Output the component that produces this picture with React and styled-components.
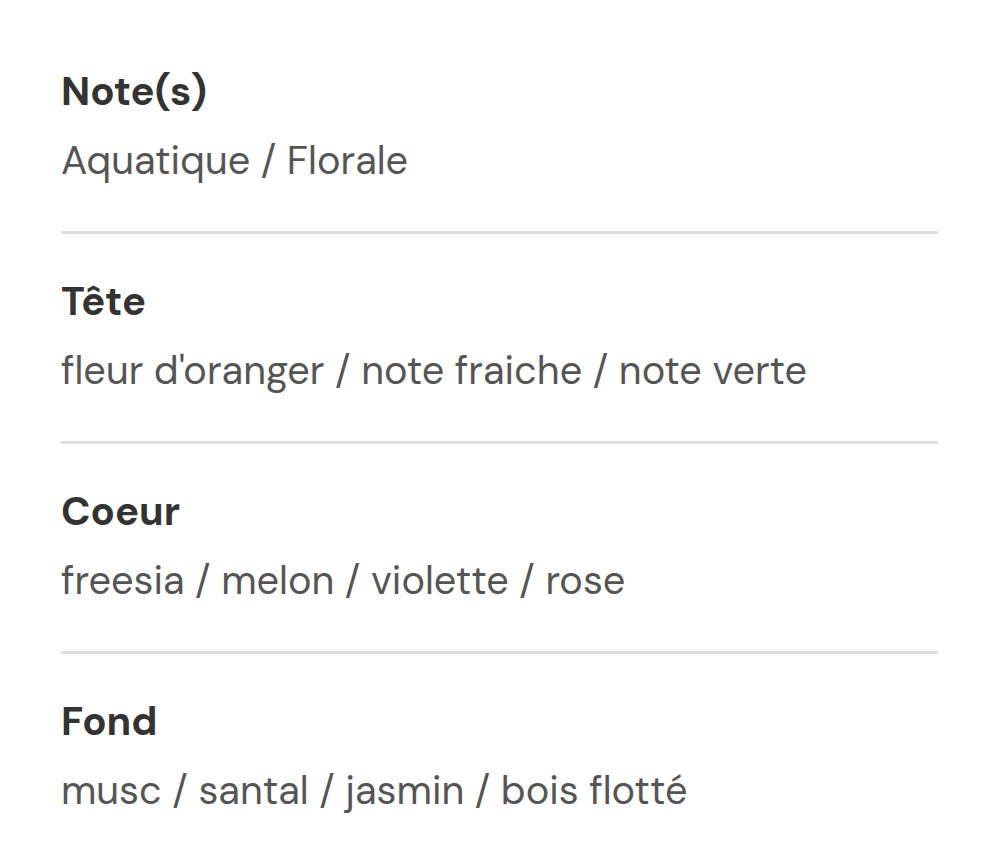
import styled, { createGlobalStyle } from "styled-components";

const notes = [
  { label: "Note(s)", value: "Aquatique / Florale" },
  { label: "Tête", value: "fleur d'oranger / note fraiche / note verte" },
  { label: "Coeur", value: "freesia / melon / violette / rose" },
  { label: "Fond", value: "musc / santal / jasmin / bois flotté" },
];

export default function App() {
  return (
    <>
      <GlobalStyle />
      <Page>
        <List>
          {notes.map((note, index) => (
            <Item key={index} $last={index === notes.length - 1}>
              <Label>{note.label}</Label>
              <Value>{note.value}</Value>
            </Item>
          ))}
        </List>
      </Page>
    </>
  );
}

const GlobalStyle = createGlobalStyle`
  html, body {
    margin: 0;
    padding: 0;
    background: #ffffff;
  }
  body {
    font-family: "DM Sans", Inter, "Noto Sans", sans-serif;
  }
`;

const Page = styled.div`
  width: 1002px;
  min-height: 852px;
  background: #ffffff;
  padding: 24px 64px 0 61px;
  box-sizing: border-box;
`;

const List = styled.ul`
  list-style: none;
  margin: 0;
  padding: 0;
`;

const Item = styled.li`
  display: flex;
  flex-direction: column;
  gap: 20px;
  padding: 42px 0 45px;
  border-bottom: ${(p) => (p.$last ? "none" : "3px solid #dedede")};
`;

const Label = styled.span`
  font-size: 40px;
  line-height: 50px;
  font-weight: 700;
  color: #333333;
`;

const Value = styled.span`
  font-size: 39.7px;
  line-height: 50px;
  font-weight: 400;
  color: #555555;
`;
